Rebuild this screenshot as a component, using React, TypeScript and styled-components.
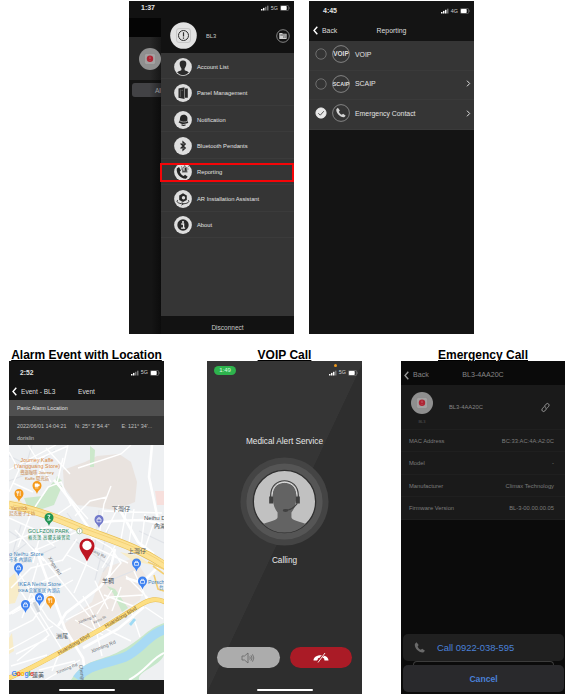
import React from "react";
import styled, { createGlobalStyle } from "styled-components";

const Global = createGlobalStyle`
  * { box-sizing: border-box; }
  body { margin: 0; background: #fff; font-family: "Liberation Sans", Arial, sans-serif; }
  svg { display: block; flex: none; }
`;

const Page = styled.main`
  width: 568px;
  height: 696px;
  overflow: hidden;
  background: #fff;
`;
const TopRow = styled.section`
  display: flex;
  gap: 15px;
  padding: 1px 0 0 129px;
  height: 348px;
`;
const BottomRow = styled.section`
  display: grid;
  grid-template-columns: 155px 155px 164px;
  column-gap: 43px;
  padding-left: 9px;
  & > :last-child { margin-left: -4px; margin-right: 4px; }
`;
const Column = styled.div`
  display: flex;
  flex-direction: column;
`;
const Caption = styled.h2`
  margin: 0;
  height: 13px;
  font-size: 12px;
  line-height: 14px;
  font-weight: 700;
  text-align: center;
  color: #000;
  text-decoration: underline;
  text-decoration-thickness: 1px;
  text-underline-offset: 1px;
  white-space: nowrap;
`;
const Phone = styled.article<{ $w: number; $bg: string }>`
  width: ${(p) => p.$w}px;
  height: 333px;
  background: ${(p) => p.$bg};
  display: flex;
  flex-direction: column;
  overflow: hidden;
  white-space: nowrap;
  position: relative;
`;
const StatusBar = styled.div<{ $h: number; $pad: string }>`
  height: ${(p) => p.$h}px;
  padding: ${(p) => p.$pad};
  flex: none;
  display: flex;
  justify-content: space-between;
  align-items: center;
`;
const Clock = styled.span<{ $size?: number }>`
  font-size: ${(p) => p.$size ?? 7}px;
  font-weight: 700;
  color: #e4e4e4;
  line-height: 8px;
`;
const Signals = styled.div`
  display: flex;
  align-items: center;
  gap: 2px;
  font-size: 5.4px;
  line-height: 7px;
  color: #d0d0d0;
`;
const Status = ({ net = "5G", bars = 2 }: { net?: string; bars?: number }) => (
  <Signals>
    <svg width="8" height="6" viewBox="0 0 8 6">
      {[0, 1, 2, 3].map((i) => (
        <rect key={i} x={i * 2} y={4 - i * 1.1} width="1.5" height={1.5 + i * 1.1} fill={i < bars ? "#fff" : "#777"} />
      ))}
    </svg>
    <span>{net}</span>
    <svg width="10" height="6" viewBox="0 0 10 6">
      <rect x=".3" y=".4" width="8.400" height="5.200" rx="1.400" fill="none" stroke="#8c8c8c" strokeWidth=".6" />
      <rect x=".9" y="1" width="5.800" height="4" rx=".7" fill="#fff" />
      <path d="M9.300 2.200v1.700" stroke="#777" strokeWidth=".6" />
    </svg>
  </Signals>
);

/* Side menu */
const MenuBody = styled.div`
  flex: 1;
  display: flex;
`;
const Behind = styled.div`
  width: 32px;
  background: linear-gradient(90deg, #151515 70%, #0c0c0c);
`;
const BehindHeader = styled.div`
  height: 19px;
  background: #050505;
`;
const BehindDevice = styled.div`
  height: 43px;
  padding-left: 9.5px;
  background: linear-gradient(90deg, #282828 65%, #171717);
  display: flex;
  align-items: center;
`;
const Segment = styled.div`
  margin: 3px 0 0 3px;
  height: 14px;
  border-radius: 3px 0 0 3px;
  background: linear-gradient(90deg, #424245 60%, #262628);
  padding: 4px 0 0 23px;
  overflow: hidden;
  font-size: 6.5px;
  line-height: 7px;
  color: #999;
`;
const Drawer = styled.div`
  width: 133px;
  background: #353535;
  display: flex;
  flex-direction: column;
`;
const DrawerHeader = styled.div`
  height: 35px;
  background: #121212;
  padding: 0 4px 0 9px;
  display: flex;
  align-items: center;
  font-size: 5.8px;
  color: #c8c8c8;
  & > span { flex: 1; padding-left: 9px; }
`;
const MenuRow = styled.div<{ $marked?: boolean }>`
  height: 26.45px;
  padding: 2px 0 0 13px;
  display: flex;
  align-items: center;
  gap: 5px;
  font-size: 5.8px;
  color: #e2e2e2;
  border-bottom: 1px solid #3b3b3b;
  position: relative;
  ${(p) => p.$marked && `&::after {
    content: "";
    position: absolute;
    inset: 4px 0 2px -1px;
    border: 2px solid #f50508;
  }`}
`;
const Disconnect = styled.div`
  margin-top: auto;
  height: 18px;
  background: #121212;
  text-align: center;
  font-size: 6.5px;
  line-height: 24px;
  color: #c8c8c8;
`;

type IconName = "account" | "panel" | "bell" | "bluetooth" | "reporting" | "ar" | "about";
const glyphs: Record<IconName, React.ReactNode> = {
  account: (
    <path d="M9 2.500c-2.500 0-3.600 1.700-3.300 3.800.2 1.600.8 3.200 1.700 4.100v1.500c0 .7-3.800 1-4.200 2.700A8.400 8.400 0 0 0 9 17.300a8.400 8.400 0 0 0 5.800-2.700c-.4-1.700-4.200-2-4.200-2.700v-1.500c.9-.9 1.500-2.500 1.700-4.100C12.600 4.200 11.500 2.500 9 2.500Z" fill="#2b2b2b" />
  ),
  panel: (
    <g fill="#292929">
      <path d="M4.500 4.500l6-1.300v11.800l-6-1.200zM11 4.500h2.800v9.300H11z" />
      <path d="M6.300 5.500v7.500M7.500 6.300h1.500" stroke="#888" strokeWidth=".6" />
    </g>
  ),
  bell: (
    <g>
      <path d="M9 3.800c3.300-.6 5 2 4.400 4.800-.3 1.500.4 2.200 1 3-2.500 2-6.800 2-9.900-.4 1.500-.8 1.300-2.400 1.500-3.900C6.200 5.300 7.300 4.100 9 3.800Z" fill="#252525" />
      <path d="M6 10c2.500 1.300 5 1.300 7.300.2" fill="none" stroke="#ddd" strokeWidth=".6" />
      <path d="M7.500 13.800c1.300.7 3 .6 4-.1" fill="none" stroke="#252525" strokeWidth="1.300" />
    </g>
  ),
  bluetooth: <path d="M6.600 6.500l4.700 4.600L9 13.200V4.800l2.300 2.100-4.700 4.600" fill="none" stroke="#252525" strokeWidth="1.200" />,
  reporting: (
    <g>
      <path d="M2.800 5.500c-.8 5.300 3.800 10.400 9.200 10.200l1.700-1.900-2.600-2.100-1.500 1.200c-2-.8-3.200-2.400-3.800-4.200L7 7.400 5 4Z" fill="#242424" />
      <path d="M8.800 8.200V5.500c0-2.300 3.900-2.300 3.900 0v2.700zM8 8.900h5.500M10.700 1.700v1M7 3.500l.8.700M14.500 3.500l-.8.700M7 6h.8M13.600 6h.9" stroke="#242424" strokeWidth=".8" fill="none" />
      <path d="M10.600 4.800h1.500v3h-1.500z" fill="#242424" />
    </g>
  ),
  ar: (
    <g>
      <path d="M5.200 5.500L9 3.300l3.800 2.200v4.600L9 12 5.200 10.100Z" fill="#292929" />
      <circle cx="9.500" cy="7.700" r="1.700" fill="#ddd" />
      <path d="M4 10c-3 2 1.500 3.800 5 3.800 4 0 7.500-1.800 5-3.800M7.500 12.200l1.800 1.600-1.800 1.400" fill="none" stroke="#292929" strokeWidth=".9" />
    </g>
  ),
  about: (
    <g>
      <circle cx="9" cy="9" r="5.700" fill="#292929" />
      <circle cx="9" cy="6" r="1" fill="#eee" />
      <path d="M7.300 8H9.600v4M7.100 12.100h4" stroke="#eee" strokeWidth="1.300" fill="none" />
    </g>
  ),
};
const MenuIcon = ({ name }: { name: IconName }) => (
  <svg width="18" height="18" viewBox="0 0 18 18">
    <circle cx="9" cy="9" r="8.900" fill="#dedede" />
    {glyphs[name]}
  </svg>
);
const menu: [IconName, string][] = [
  ["account", "Account List"],
  ["panel", "Panel Management"],
  ["bell", "Notification"],
  ["bluetooth", "Bluetooth Pendants"],
  ["reporting", "Reporting"],
  ["ar", "AR Installation Assistant"],
  ["about", "About"],
];
const Device = ({ size }: { size: number }) => (
  <svg width={size} height={size} viewBox="0 0 22 22">
    <circle cx="11" cy="11" r="11" fill="#8f8f8f" />
    <rect x="5.500" y="5.500" width="11" height="11" rx="2" fill="#a3a1a1" stroke="#858585" strokeWidth=".5" />
    <circle cx="11" cy="10.700" r="3.200" fill="#ae2433" />
    <path d="M11 8.700v2.300M11 12.200v.7" stroke="#c9767f" strokeWidth=".7" />
  </svg>
);

/* Shared navigation bar */
const NavBar = styled.div<{ $h: number; $tone: string; $size: number; $bg?: string; $pad?: string }>`
  height: ${(p) => p.$h}px;
  flex: none;
  display: grid;
  grid-template-columns: 1fr auto 1fr;
  align-items: center;
  padding: ${(p) => p.$pad ?? "0 4px"};
  background: ${(p) => p.$bg ?? "transparent"};
  font-size: ${(p) => p.$size}px;
  color: ${(p) => p.$tone};
`;
const BackLink = styled.div`
  display: flex;
  align-items: center;
  gap: 4px;
`;
const Chevron = ({ color = "#fff" }: { color?: string }) => (
  <svg width="5" height="9" viewBox="0 0 5 9">
    <path d="M4.300.7L1 4.500l3.300 3.800" fill="none" stroke={color} strokeWidth="1.400" />
  </svg>
);

/* Reporting list */
const OptionRow = styled.div`
  height: 29.5px;
  flex: none;
  background: #353535;
  border-bottom: 1px solid #3a3a3a;
  padding: 0 3px 2px 6px;
  display: flex;
  align-items: center;
  font-size: 6.9px;
  color: #e2e2e2;
  & > svg:nth-child(2) { margin: 0 5px 0 5px; }
  & > span { flex: 1; }
`;
const Radio = ({ on }: { on?: boolean }) => (
  <svg width="12" height="12" viewBox="0 0 12 12">
    <circle cx="6" cy="6" r="5.200" fill={on ? "#e8e8e8" : "none"} stroke={on ? "#e8e8e8" : "#888"} strokeWidth=".7" />
    {on && <path d="M3.300 6.200l2 2 3.500-4" fill="none" stroke="#444" strokeWidth=".9" />}
  </svg>
);
const handset =
  "M5 2.500 3.100 4.400c-.7 4.700 5 10.400 9.700 9.700l1.900-1.900-3.200-2.400-1.600 1.200C8.200 10.400 6.800 9 6.300 7.400l1.200-1.700Z";
const Badge = ({ text }: { text?: string }) => (
  <svg width="18" height="18" viewBox="0 0 18 18">
    <circle cx="9" cy="9" r="8.400" fill="none" stroke="#a5a5a5" strokeWidth=".7" />
    {text ? (
      <text x="9" y="11.200" textAnchor="middle" fontSize={text.length > 4 ? 5.8 : 6.4} fontWeight="700" fill="#dedede" textLength={text.length > 4 ? 16.5 : 15.5} lengthAdjust="spacingAndGlyphs">
        {text}
      </text>
    ) : (
      <path d={handset} transform="translate(1.800 1.800) scale(.81)" fill="#d5d5d5" />
    )}
  </svg>
);
const Next = () => (
  <svg width="5" height="7" viewBox="0 0 5 7">
    <path d="M1 .7l2.700 2.800L1 6.300" fill="none" stroke="#dedede" strokeWidth="1" />
  </svg>
);

/* Alarm location */
const EventTitle = styled.div`
  height: 16px;
  flex: none;
  background: #505050;
  padding-left: 8px;
  font-size: 5.4px;
  line-height: 16px;
  color: #e0e0e0;
`;
const EventInfo = styled.div`
  height: 29px;
  flex: none;
  background: #353535;
  display: grid;
  grid-template-columns: 58px 46.5px 1fr;
  padding: 7px 0 0 8px;
  grid-auto-rows: 12px;
  font-size: 5.4px;
  line-height: 7px;
  color: #c2c2c2;
`;
const HomeStrip = styled.div<{ $bg?: string }>`
  flex: 1;
  background: ${(p) => p.$bg ?? "transparent"};
  display: flex;
  align-items: flex-end;
  justify-content: center;
  padding-bottom: 3.5px;
  &::after {
    content: "";
    width: 56px;
    height: 2px;
    border-radius: 1px;
    background: #fff;
  }
`;

const Pin = ({ x, y, color, kind = "bag" }: { x: number; y: number; color: string; kind?: "bag" | "cup" | "fork" | "golf" }) => (
  <g transform={`translate(${x} ${y})`}>
    <path d="M0 7C-1 3-4.500 2.500-4.500-1.500a4.500 4.500 0 0 1 9 0C4.500 2.500 1 3 0 7Z" fill={color} />
    {kind === "bag" && <path d="M-2-2h4v2.800h-4zM-1-2v-1.200h2V-2" fill="none" stroke="#fff" strokeWidth=".7" />}
    {kind === "cup" && <path d="M-2-3.200h3v3h-3zM1-2.600h1.300v1.500H1M-2 1h3.500" fill="#fff" stroke="#fff" strokeWidth=".5" />}
    {kind === "fork" && <path d="M-1.300-4v2.300M-1.300-2v3M1.200-4v5M-2.200-4v2h1.800v-2" fill="none" stroke="#fff" strokeWidth=".7" />}
    {kind === "golf" && <path d="M-1.500-3.700h2.500L-.5-1 1.300 1h-3" fill="none" stroke="#fff" strokeWidth=".9" />}
  </g>
);
const CJK = '"Liberation Sans", "Noto Sans CJK TC", sans-serif';
const LocationMap = () => (
  <svg width="155" height="235" viewBox="9 445 155 235" fontFamily={CJK}>
    <rect x="9" y="445" width="155" height="235" fill="#eef0f2" />
    <path d="M63 470l22-8 12-6 22-2 12 8 6 20-2 20-20 8-20-3-18-2-13-18Z" fill="#e9e3df" />
    <path d="M104 568l30-10 12 18-6 24-40 26-30 18-6-20 28-22Z" fill="#eee8e4" />
    <path d="M9 578l6-5 5 17-5 13-6 1ZM9 638l3-5 2 18-5 3ZM9 500l12 1 3 6-15-3ZM120 552l18 4 14 9-19-4Z" fill="#f8ecc8" />
    <path d="M24 498l19-2 10-14 9 4-8 19-24 8ZM54 489l3-13 5 5M90 446l5 4-1 17h-4ZM107 586l8 3 13 19-6 4-9-19Z" fill="#cce8cb" />
    <path d="M155 491h9v14h-7Z" fill="#f7dfdc" />
    <g fill="none" stroke="#e0e3e8" strokeWidth="1.200">
      <path d="M9 456l24 11 22-17M32 445l-7 24M9 481l24-9M99 510l-4 35M67 513l16 21M9 531l28 19 34-17M108 529l-13 51M27 543l-18 14M14 567l42-20M74 540l37 27M21 525l-8 27M139 531l25 12M133 571l-27 11M114 556l-11 16" />
    </g>
    <g fill="none" stroke="#fff" strokeWidth="1.400">
      <path d="M9 452l10 18-10 22M28 445l23 37M44 457l-9 30M26 464l42-18M9 470l47-25M46 448l24 26M68 445l-5 22M78 468l43-14 10-9M57 483l6-25M54 480l34 39M33 492l-20-9" />
      <path d="M35 507l13-20 13-5 10 23-13 9M75 516l15-15 17-4M111 486l-7 18-5 32M119 505l-13 27M127 507l-6 32M134 509l-5 34M104 511l58 2M9 518l25 11 20 17M31 513l-13 34M9 543l38-16 25 3M42 527l-9 36M9 562l74-33M15 530l29 31M68 523l43 25 10 15-17 20M94 528l-8 37-12 28M77 539l-15 22M67 555l31 16M94 547l34 16M115 546l-13 22M145 514l-4 34M153 525l-9 26" />
      <path d="M35 548l55 69 8 18M11 588l20-20 32-8M17 570l31 49 19 15M38 563l-7 24 40-19M12 614l61-34M20 590l29 45-32 26M34 585l-12 33M9 632l24-12 17-25M9 650l44-24M32 601l32 52M16 654l31-15M66 620l45-23 32-2M95 581l13 28M83 596l20 36M112 590l-15 24M121 587l-9 24M104 595l29 11M75 620l28 15M126 576l22 22M134 571l13 29M145 607l18 12M131 610l9 27M61 649l-9 22M75 641l31-12 25 12M97 634l5 22M80 660l-35 20M11 666l36-11M39 670l36-9" />
      <path d="M54 480c18 20 25 35 39 54M95 523l19-2 29-1 21 4M152 445l-3 32 9 43M120 510l18 32 16 12M115 549l-6 26-9 12-34 26-8 13M9 614l22-14 21-11M36 549l29 80 18 29 3 22M126 578l16 5 16-16M144 607l-26 22-35 19" strokeWidth="2.600" />
    </g>
    <path d="M9 505c20 3 46 12 74 24 32 12 57 19 84 38" fill="none" stroke="#e7bf56" strokeWidth="8" />
    <path d="M9 505c20 3 46 12 74 24 32 12 57 19 84 38" fill="none" stroke="#fde293" strokeWidth="6.800" />
    <path d="M13 505c18 3 44 12 70 23 32 12 57 19 82 36" fill="none" stroke="#efca6c" strokeWidth=".7" />
    <path d="M164 623c-18 6-22 17-44 28-20 11-35 7-49 29h68c-2-9 20-13 25-25Z" fill="#c6e7ca" />
    <path d="M167 629c-18 4-26 21-42 28-22 8-37 7-48 22" fill="none" stroke="#a8daf4" strokeWidth="9.500" />
    <path d="M164 653c-12 5-18 18-35 27" fill="none" stroke="#fff" strokeWidth="2" />
    <path d="M9 678c35-15 65-34 94-50l37-23c10-6 17-7 25-3" fill="none" stroke="#e7bf56" strokeWidth="4.800" />
    <path d="M9 678c35-15 65-34 94-50l37-23c10-6 17-7 25-3" fill="none" stroke="#fddf83" strokeWidth="3.800" />
    <path d="M148 562l16 7M153 566l11 8M154 575l4 14 6 2" fill="none" stroke="#f3cf72" strokeWidth="1.600" />
    <path d="M129 624l5-6 2 2-5 6Z" fill="#9edaf4" />
    <path d="M34 602l5 10" stroke="#cdd2d8" strokeWidth="3" />
    <g fill="#c5813b" fontSize="5.200" textAnchor="middle">
      <text x="37" y="461.500" textLength="33" fill="#d98539">Journey Kaffe</text>
      <text x="37" y="468" textLength="46" fill="#d98539">(Yangguang Store)</text>
      <text x="37" y="474" fontSize="4.300">覺旅咖啡 Journey</text>
      <text x="37" y="479.500" fontSize="4.300">Kaffe 陽光店</text>
      <text x="19" y="509.500" fontSize="4.900">Yannick</text>
      <text x="20" y="515" fontSize="4.300">亞尼克菓子工坊</text>
    </g>
    <g fill="#23865a" textAnchor="middle">
      <text x="48.500" y="533" fontSize="5.200" textLength="41">GOLFZON PARK</text>
      <text x="49" y="539" fontSize="4.200" textLength="42">裕克漢 高爾夫練習場</text>
    </g>
    <g fill="#4c555e" fontSize="6.200" textAnchor="middle">
      <text x="121" y="511">下灣仔</text>
      <text x="137" y="553">上灣仔</text>
      <text x="108" y="582.500" fontSize="6">羊稠</text>
      <text x="62" y="638" fontSize="6">洲尾</text>
      <text x="38" y="677" fontSize="6">蓮美</text>
      <text x="144" y="520" fontSize="6" textAnchor="start">Neihu District</text>
      <text x="154" y="528" fontSize="6" textAnchor="start">內湖區</text>
    </g>
    <g fill="#3a7fb9" fontSize="5.300">
      <text x="9" y="556" textLength="34.500">o Neihu Store</text>
      <text x="9" y="561" fontSize="4.300">市多 內湖店</text>
      <text x="18" y="585.500" textLength="43">IKEA Neihu Store</text>
      <text x="18" y="591.500" fontSize="4.300" textLength="42">IKEA 宜家家居 內湖店</text>
      <text x="148" y="583.500">Porsche</text>
      <text x="159" y="589" fontSize="4.300">台北</text>
    </g>
    <g fill="#78581f" fontSize="5.300">
      <text transform="translate(59 655) rotate(-31)">Huandong Blvd</text>
      <text transform="translate(106 628) rotate(-31)">Huandong Blvd</text>
    </g>
    <g fill="#6c7076" fontSize="4.700">
      <text transform="translate(48 558) rotate(58)">Xingai Rd</text>
      <text transform="translate(92 653) rotate(-22)" fontSize="5">Xinming Rd</text>
      <text transform="translate(57 674) rotate(-22)" fontSize="4.300">Xinming Rd</text>
      <text transform="translate(79 624) rotate(-23)" fontSize="4">Xinfeng St</text>
      <text transform="translate(94 624) rotate(-27)" fontSize="3.600">Xinhu St</text>
      <text transform="translate(79 665) rotate(82)" fontSize="5">Chenggong</text>
      <text transform="translate(91 551) rotate(28)" fontSize="4">Kang Rd</text>
    </g>
    <circle cx="79.500" cy="531" r="2.800" fill="#fff" stroke="#75a77e" strokeWidth=".6" />
    <path d="M79.500 529.500v3" stroke="#999" strokeWidth=".6" />
    <Pin x={37} y={487} color="#f59a1b" kind="cup" />
    <Pin x={19} y={495} color="#f59a1b" kind="fork" />
    <Pin x={49} y={519} color="#229455" kind="golf" />
    <Pin x={99} y={521} color="#7078ca" />
    <Pin x={136.5} y={564.5} color="#3e82f1" />
    <Pin x={18.5} y={569} color="#3e82f1" />
    <Pin x={39.5} y={599} color="#3e82f1" />
    <Pin x={25.5} y={606} color="#3e82f1" />
    <Pin x={50.5} y={602} color="#f59a1b" kind="fork" />
    <Pin x={142.5} y={582.5} color="#3e82f1" />
    <path d="M87 561.500c-2.400-6-7.500-10.500-7.500-15.600a7.500 7.500 0 0 1 15 0c0 5.100-5.100 9.600-7.500 15.600Z" fill="#be1622" />
    <circle cx="87" cy="545.500" r="4.700" fill="#fff" />
    <text x="11.500" y="675.500" fontSize="7" fontWeight="700" textLength="22.500">
      <tspan fill="#4285f4">G</tspan>
      <tspan fill="#ea4335">o</tspan>
      <tspan fill="#fbbc05">o</tspan>
      <tspan fill="#4285f4">g</tspan>
      <tspan fill="#34a853">l</tspan>
      <tspan fill="#ea4335">e</tspan>
    </text>
  </svg>
);

/* Voice call */
const CallPhone = styled(Phone)`
  background: linear-gradient(115.3deg, #353535 50%, #2e2e2e 50.2%);
`;
const TimePill = styled.div`
  width: 22px;
  height: 9px;
  border-radius: 5px;
  background: #2eb34d;
  color: #d9ffe0;
  font-size: 6px;
  line-height: 9px;
  text-align: center;
`;
const SignalStack = styled.div`
  display: flex;
  flex-direction: column;
  align-items: center;
  gap: 2px;
`;
const MicDot = styled.i`
  width: 3px;
  height: 3px;
  margin-left: -16px;
  border-radius: 50%;
  background: #ed981c;
`;
const CallText = styled.p`
  flex: none;
  margin: 0;
  height: 12px;
  text-align: center;
  font-size: 8.25px;
  line-height: 12px;
  color: #e8e8e8;
`;
const Caller = styled(CallText)`
  margin-top: 57px;
`;
const Avatar = styled.div`
  flex: none;
  height: 89px;
  margin: 9px 0 8.5px;
  display: flex;
  justify-content: center;
`;
const CallActions = styled.div`
  display: flex;
  gap: 10px;
  padding: 0 10px;
  margin-top: auto;
`;
const CallButton = styled.button<{ $bg: string }>`
  flex: 1;
  height: 21px;
  padding: 0;
  border: 0;
  border-radius: 11px;
  background: ${(p) => p.$bg};
  display: flex;
  align-items: center;
  justify-content: center;
`;
const CallFoot = styled.div`
  height: 26px;
  display: flex;
`;

/* Emergency call */
const DeviceHead = styled.div`
  height: 44.5px;
  flex: none;
  padding: 7px 15px 0 10px;
  display: flex;
  background: #1a1a1a;
  border-bottom: 1px solid #1f1f1f;
  color: #858585;
  font-size: 5.8px;
`;
const DeviceBadge = styled.div`
  width: 22px;
  text-align: center;
  font-size: 4px;
  line-height: 5px;
  color: #555;
  & > svg { margin-bottom: 5px; }
`;
const DeviceName = styled.div`
  flex: 1;
  padding: 12px 0 0 16px;
  line-height: 7px;
`;
const DetailRow = styled.div`
  height: 22.5px;
  flex: none;
  padding: 1px 11px 0 8px;
  display: flex;
  align-items: center;
  justify-content: space-between;
  background: #1a1a1a;
  border-bottom: 1px solid #1f1f1f;
  color: #7c7c7c;
  font-size: 5.8px;
`;
const ActionSheet = styled.div`
  margin-top: auto;
  padding: 0 1px 2px 2px;
`;
const SheetButton = styled.button<{ $strong?: boolean }>`
  width: 100%;
  height: 27px;
  border: 0;
  border-radius: 5px;
  background: ${(p) => (p.$strong ? "#29292c" : "#202020")};
  padding: 0 0 0 ${(p) => (p.$strong ? 0 : 10)}px;
  display: flex;
  align-items: center;
  justify-content: ${(p) => (p.$strong ? "center" : "flex-start")};
  gap: 10px;
  font-family: inherit;
  font-size: ${(p) => (p.$strong ? 8.6 : 9.4)}px;
  font-weight: ${(p) => (p.$strong ? 700 : 400)};
  color: #4a80d8;
`;
const SheetGap = styled.div`
  height: 4px;
  margin: 0 10px;
  border: 1px solid #3c3c3c;
  border-bottom: 0;
  border-radius: 4px 4px 0 0;
`;
const details = [
  ["MAC Address", "BC:33:AC:4A:A2:0C"],
  ["Model", "-"],
  ["Manufacturer", "Climax Technology"],
  ["Firmware Version", "BL-3-00.00.00.05"],
];

export default function App() {
  return (
    <>
      <Global />
      <Page>
        <TopRow>
          <Phone $w={165} $bg="#121212">
            <StatusBar $h={17} $pad="0 4px 3px 12px">
              <Clock>1:37</Clock>
              <Status />
            </StatusBar>
            <MenuBody>
              <Behind>
                <BehindHeader />
                <BehindDevice><Device size={22} /></BehindDevice>
                <Segment>All</Segment>
              </Behind>
              <Drawer>
                <DrawerHeader>
                  <svg width="27" height="27" viewBox="0 0 27 27">
                    <circle cx="13.500" cy="13.500" r="13.300" fill="#e2e2e2" />
                    <rect x="6.500" y="6.500" width="14" height="14" rx="2.500" fill="#e0e0e0" stroke="#bbb" strokeWidth=".7" />
                    <circle cx="13.500" cy="13.500" r="5" fill="none" stroke="#2d2d2d" strokeWidth="1" />
                    <path d="M13.500 10.200v4.300M13.500 15.500v1.200" stroke="#2d2d2d" strokeWidth="1.200" />
                  </svg>
                  <span>BL3</span>
                  <svg width="14" height="14" viewBox="0 0 14 14">
                    <circle cx="7" cy="7" r="6.300" fill="none" stroke="#b8b8b8" strokeWidth=".7" />
                    <path d="M3.300 4h2.800l.8.700h3.700V10H3.300Z" fill="#cfcfcf" />
                    <path d="M4.300 6h5.500M7.800 7.300v1.500M9.200 7.300v1.500" stroke="#252525" strokeWidth=".7" />
                  </svg>
                </DrawerHeader>
                {menu.map(([icon, label]) => (
                  <MenuRow key={label} $marked={icon === "reporting"}>
                    <MenuIcon name={icon} />
                    {label}
                  </MenuRow>
                ))}
                <Disconnect>Disconnect</Disconnect>
              </Drawer>
            </MenuBody>
          </Phone>

          <Phone $w={165} $bg="#141414">
            <StatusBar $h={18} $pad="2px 4px 0 14px">
              <Clock>4:45</Clock>
              <Status net="4G" bars={3} />
            </StatusBar>
            <NavBar $h={22} $tone="#dedede" $size={6.9}>
              <BackLink><Chevron />Back</BackLink>
              <span>Reporting</span>
            </NavBar>
            <OptionRow><Radio /><Badge text="VOIP" /><span>VOIP</span></OptionRow>
            <OptionRow><Radio /><Badge text="SCAIP" /><span>SCAIP</span><Next /></OptionRow>
            <OptionRow><Radio on /><Badge /><span>Emergency Contact</span><Next /></OptionRow>
          </Phone>
        </TopRow>

        <BottomRow>
          <Column>
            <Caption>Alarm Event with Location</Caption>
            <Phone $w={155} $bg="#141414">
              <StatusBar $h={21} $pad="2px 4px 0 11px">
                <Clock $size={6.7}>2:52</Clock>
                <Status />
              </StatusBar>
              <NavBar $h={18} $tone="#dedede" $size={6.6} $pad="0 3px">
                <BackLink><Chevron />Event - BL3</BackLink>
                <span>Event</span>
              </NavBar>
              <EventTitle>Panic Alarm Location</EventTitle>
              <EventInfo>
                <span>2022/06/01 14:04:21</span>
                <span>N: 25° 3' 54.4"</span>
                <span>E: 121° 34'...</span>
                <span>dorislin</span>
              </EventInfo>
              <LocationMap />
              <HomeStrip $bg="#1c1c1c" />
            </Phone>
          </Column>

          <Column>
            <Caption>VOIP Call</Caption>
            <CallPhone $w={155} $bg="#353535">
              <StatusBar $h={18} $pad="0 4px 0 7px">
                <TimePill>1:49</TimePill>
                <SignalStack><MicDot /><Status bars={3} /></SignalStack>
              </StatusBar>
              <Caller>Medical Alert Service</Caller>
              <Avatar>
                <svg width="89" height="89" viewBox="0 0 90 90">
                  <circle cx="45" cy="45" r="44.500" fill="#444" />
                  <circle cx="45" cy="45" r="38.500" fill="#555" />
                  <circle cx="45" cy="45" r="31.500" fill="#c1c1c1" stroke="#303030" strokeWidth="1.300" />
                  <path d="M33 38c0-8 4-12 12-12s12 4 12 12c0 8-1 13-5 18v5c0 3 8 4 14.500 6.800a31 31 0 0 1-43 0C30 65 38 64 38 61v-5c-4-5-5-10-5-18Z" fill="#636363" />
                  <path d="M31 41v-2c0-20 28-20 28 0v2" fill="none" stroke="#414141" strokeWidth="1.200" />
                  <path d="M32.500 38c1-16.500 24-16.500 25 0" fill="none" stroke="#ddd" strokeWidth="1" />
                  <path d="M29.500 40h4v7h-4zM56.500 40h4v7h-4z" fill="#404040" />
                  <path d="M58 47c-3 4-6 7-12 7" fill="none" stroke="#414141" strokeWidth="1.200" />
                  <ellipse cx="46" cy="54" rx="2.800" ry="1.500" fill="#414141" />
                </svg>
              </Avatar>
              <CallText>Calling</CallText>
              <CallActions>
                <CallButton $bg="#acacac">
                  <svg width="14" height="12" viewBox="0 0 14 12">
                    <path d="M1 4h2.500L7 1v10L3.500 8H1ZM8.700 4.500q1.200 1.500 0 3M10 3.300q2 2.700 0 5.400M11.500 2.300q2.700 3.700 0 7.400" fill="none" stroke="#666" strokeWidth=".8" />
                  </svg>
                </CallButton>
                <CallButton $bg="#aa1b26">
                  <svg width="16" height="12" viewBox="0 0 16 12">
                    <path d="M.5 8.500c0-7 15-7 15 0l-4 .1-.5-2.300c-2-.8-4-.8-6 0l-.5 2.300Z" fill="#fff" />
                    <path d="M4.500 10L12 1" stroke="#aa1b26" strokeWidth="2" />
                    <path d="M5 10.500L12 1" stroke="#fff" strokeWidth=".9" />
                  </svg>
                </CallButton>
              </CallActions>
              <CallFoot><HomeStrip /></CallFoot>
            </CallPhone>
          </Column>

          <Column>
            <Caption>Emergency Call</Caption>
            <Phone $w={164} $bg="#0b0b0b">
              <NavBar $h={24} $tone="#868686" $size={7.1} $pad="4px 3px 0" $bg="#0a0a0a">
                <BackLink><Chevron color="#959595" />Back</BackLink>
                <span>BL3-4AA20C</span>
              </NavBar>
              <DeviceHead>
                <DeviceBadge><Device size={22} />BL3</DeviceBadge>
                <DeviceName>BL3-4AA20C</DeviceName>
                <svg width="9" height="26" viewBox="0 0 9 26">
                  <g transform="translate(4.500 15.500) rotate(40)" fill="none" stroke="#a0a0a0" strokeWidth=".8">
                    <path d="M-1.700-.3v-2.700a1.700 1.700 0 0 1 3.400 0v1.800a1.700 1.700 0 0 1-1.700 1.700" />
                    <path d="M1.700.3v2.700a1.700 1.700 0 0 1-3.400 0V1.200A1.700 1.700 0 0 1 0-.5" />
                  </g>
                </svg>
              </DeviceHead>
              {details.map(([label, value]) => (
                <DetailRow key={label}><span>{label}</span><span>{value}</span></DetailRow>
              ))}
              <ActionSheet>
                <SheetButton>
                  <svg width="14" height="14" viewBox="1 1 16 16"><path d={handset} fill="#6a6a6a" /></svg>
                  Call 0922-038-595
                </SheetButton>
                <SheetGap />
                <SheetButton $strong>Cancel</SheetButton>
              </ActionSheet>
            </Phone>
          </Column>
        </BottomRow>
      </Page>
    </>
  );
}
